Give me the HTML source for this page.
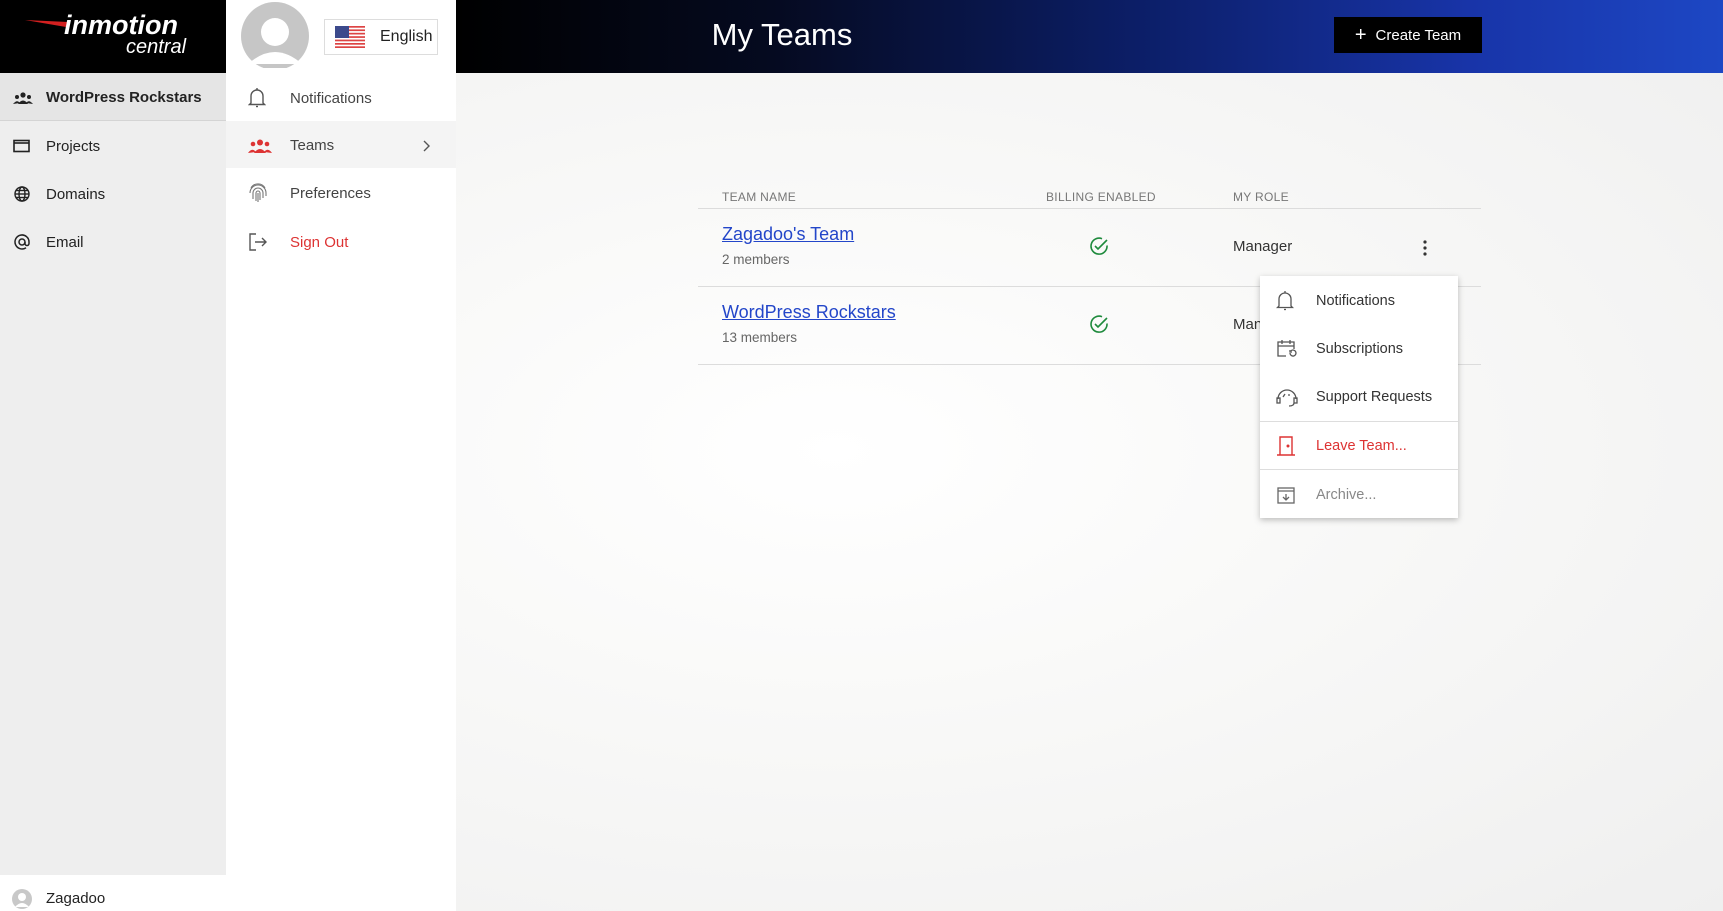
<!DOCTYPE html>
<html><head><meta charset="utf-8"><style>
*{box-sizing:border-box;margin:0;padding:0}
body{width:1723px;height:911px;overflow:hidden;font-family:"Liberation Sans",sans-serif;color:#222;position:relative;background:#f2f2f2}
.abs{position:absolute}
#logo{left:0;top:0;width:226px;height:73px;background:#000}
#side{left:0;top:73px;width:226px;height:802px;background:#eee}
.si{position:absolute;left:0;width:226px;height:48px;display:flex;align-items:center;font-size:15px;color:#222;padding-top:2px}
.si svg{position:absolute;left:13px}
.si span{position:absolute;left:46px}
#bottom{left:0;top:875px;width:226px;height:36px;background:#fff}
#panel{left:226px;top:0;width:230px;height:911px;background:#fff}
.pi{position:absolute;left:0;width:230px;height:48px;display:flex;align-items:center;font-size:15px;color:#444;padding-top:2px}
.pi svg{position:absolute;left:22px}
.pi span{position:absolute;left:64px}
#main{left:456px;top:73px;width:1267px;height:838px;background:radial-gradient(ellipse at 30% 45%,#ffffff 0%,#f8f8f7 45%,#efefef 100%)}
#hdr{left:456px;top:0;width:1267px;height:73px;background:linear-gradient(90deg,#000 0%,#050a20 25%,#0c1f6a 55%,#1834a8 80%,#1d47c4 100%)}
.th{position:absolute;top:190px;font-size:12px;color:#777;letter-spacing:.3px}
.ln{position:absolute;left:698px;width:783px;height:1px;background:#dcdcdc}
.nm{position:absolute;left:722px;font-size:18px;color:#2346c9;text-decoration:underline}
.mb{position:absolute;left:722px;font-size:13.5px;color:#666}
.rl{position:absolute;left:1233px;font-size:15px;color:#333}
#menu{left:1260px;top:276px;width:198px;height:242px;background:#fff;box-shadow:0 2px 6px rgba(0,0,0,.25)}
.mi{position:absolute;left:0;width:198px;height:44px;display:flex;align-items:center;font-size:14.5px;color:#333;padding-top:2px}
.mi svg{position:absolute;left:16px}
.mi span{position:absolute;left:56px}
</style></head><body>
<div id="logo" class="abs">
<svg width="226" height="73" viewBox="0 0 226 73"><path d="M25 20 L68 22 L66 27 Z" fill="#d32020"/>
<text x="64" y="34" font-family="Liberation Sans" font-weight="bold" font-style="italic" font-size="27" fill="#fff">inmotion</text>
<text x="126" y="53" font-family="Liberation Sans" font-style="italic" font-size="20" fill="#fff">central</text></svg>
</div>
<div id="side" class="abs">
<div class="si" style="top:0;background:#e5e5e5;border-bottom:1px solid #d4d4d4;font-weight:bold"><svg width="20" height="14" viewBox="0 0 20 14"><circle cx="10" cy="4" r="2.6" fill="#222"/><circle cx="4" cy="6" r="2" fill="#222"/><circle cx="16" cy="6" r="2" fill="#222"/><path d="M5 13 Q10 6 15 13Z M0 13 Q4 8 7 12Z M13 12 Q16 8 20 13Z" fill="#222"/></svg><span>WordPress Rockstars</span></div>
<div class="si" style="top:48px"><svg width="18" height="14"><rect x="1" y="1.5" width="15" height="11" fill="none" stroke="#222" stroke-width="1.6"/><line x1="1" y1="4" x2="16" y2="4" stroke="#222" stroke-width="1.6"/></svg><span>Projects</span></div>
<div class="si" style="top:96px"><svg width="18" height="18" viewBox="0 0 18 18" fill="none" stroke="#222" stroke-width="1.4"><circle cx="9" cy="9" r="7"/><ellipse cx="9" cy="9" rx="3" ry="7"/><line x1="2" y1="9" x2="16" y2="9"/><line x1="3" y1="5.5" x2="15" y2="5.5"/><line x1="3" y1="12.5" x2="15" y2="12.5"/></svg><span>Domains</span></div>
<div class="si" style="top:144px"><svg width="18" height="18" viewBox="0 0 18 18" fill="none" stroke="#222" stroke-width="1.5"><circle cx="9" cy="9" r="3"/><path d="M12 9v1.5a2 2 0 0 0 4 0V9a7 7 0 1 0-3 5.7"/></svg><span>Email</span></div>
</div>
<div id="bottom" class="abs"><svg style="position:absolute;left:12px;top:14px" width="20" height="20"><circle cx="10" cy="10" r="10" fill="#c8c8c8"/><circle cx="10" cy="8" r="4" fill="#fff"/><path d="M3 18 Q10 10 17 18Z" fill="#fff"/></svg><span style="position:absolute;left:46px;top:15px;font-size:15px">Zagadoo</span></div>
<div id="panel" class="abs">
<svg style="position:absolute;left:14px;top:2px" width="70" height="66" viewBox="0 0 70 66"><circle cx="35" cy="34" r="34" fill="#c6c6c6"/><circle cx="35" cy="30" r="14" fill="#fff"/><path d="M8 62 Q35 38 62 62Z" fill="#fff"/></svg>
<div style="position:absolute;left:98px;top:19px;width:114px;height:36px;border:1px solid #ddd;display:flex;align-items:center">
<svg style="margin-left:10px" width="30" height="22" viewBox="0 0 30 22"><rect width="30" height="22" fill="#fff"/><g fill="#d44"><rect y="0" width="30" height="1.7"/><rect y="3.4" width="30" height="1.7"/><rect y="6.8" width="30" height="1.7"/><rect y="10.2" width="30" height="1.7"/><rect y="13.6" width="30" height="1.7"/><rect y="17" width="30" height="1.7"/><rect y="20.3" width="30" height="1.7"/></g><rect width="14" height="12" fill="#3c4a8c"/></svg>
<span style="margin-left:15px;font-size:16px;color:#222">English</span></div>
<div class="pi" style="top:73px"><svg width="18" height="22" viewBox="0 0 18 22" fill="none" stroke="#555" stroke-width="1.4"><path d="M3 16V9a6 6 0 0 1 12 0v7l1.5 1.5h-15Z"/><path d="M8 19.5h2"/><path d="M9 1v2"/></svg><span>Notifications</span></div>
<div class="pi" style="top:121px;background:#f4f4f4;height:47px"><svg width="24" height="14" viewBox="0 0 24 14"><g fill="#d33"><circle cx="12" cy="3.5" r="3"/><circle cx="5" cy="5" r="2.3"/><circle cx="19" cy="5" r="2.3"/><path d="M6 14 Q12 6 18 14Z M0 14 Q4 8 8 13Z M16 13 Q20 8 24 14Z"/></g></svg><span>Teams</span><svg style="left:197px" width="8" height="12"><path d="M1 1l5 5-5 5" fill="none" stroke="#555" stroke-width="1.4"/></svg></div>
<div class="pi" style="top:168px"><svg width="20" height="22" viewBox="0 0 20 22" fill="none" stroke="#777" stroke-width="1.1"><path d="M3 6a8 8 0 0 1 14 0"/><path d="M2 11a8 8 0 0 1 16 0v3"/><path d="M5 17v-6a5 5 0 0 1 10 0v5"/><path d="M8 19v-8a2 2 0 0 1 4 0v7"/><path d="M10 11v9"/></svg><span>Preferences</span></div>
<div class="pi" style="top:217px"><svg width="20" height="20" viewBox="0 0 20 20" fill="none" stroke="#555" stroke-width="1.4"><path d="M8 2H2v16h6"/><path d="M7 10h11M14 6l4 4-4 4"/></svg><span style="color:#d33">Sign Out</span></div>
</div>
<div id="hdr" class="abs">
<div style="position:absolute;left:0;width:652px;top:17px;text-align:center;font-size:31px;color:#fff">My Teams</div>
<div style="position:absolute;left:878px;top:17px;width:148px;height:36px;background:#000;color:#fff;font-size:15px;display:flex;align-items:center;justify-content:center"><span style="font-size:20px;margin-right:9px;font-weight:300">+</span>Create Team</div>
</div>
<div id="main" class="abs"></div>
<div class="th" style="left:722px">TEAM NAME</div>
<div class="th" style="left:1046px">BILLING ENABLED</div>
<div class="th" style="left:1233px">MY ROLE</div>
<div class="ln" style="top:208px"></div>
<div class="nm" style="top:224px">Zagadoo's Team</div>
<div class="mb" style="top:252px">2 members</div>
<svg class="abs" style="left:1089px;top:236px" width="20" height="20" viewBox="0 0 20 20" fill="none" stroke="#1e8a3c" stroke-width="1.6"><path d="M18 9.5A8 8 0 1 1 13 2.7"/><path d="M6 10l3 3 9-9"/></svg>
<div class="rl" style="top:238px">Manager</div>
<svg class="abs" style="left:1423px;top:240px" width="4" height="16"><circle cx="2" cy="2" r="1.6" fill="#333"/><circle cx="2" cy="8" r="1.6" fill="#333"/><circle cx="2" cy="14" r="1.6" fill="#333"/></svg>
<div class="ln" style="top:286px"></div>
<div class="nm" style="top:302px">WordPress Rockstars</div>
<div class="mb" style="top:330px">13 members</div>
<svg class="abs" style="left:1089px;top:314px" width="20" height="20" viewBox="0 0 20 20" fill="none" stroke="#1e8a3c" stroke-width="1.6"><path d="M18 9.5A8 8 0 1 1 13 2.7"/><path d="M6 10l3 3 9-9"/></svg>
<div class="rl" style="top:316px">Manager</div>
<div class="ln" style="top:364px"></div>
<div id="menu" class="abs">
<div class="mi" style="top:2px"><svg width="18" height="22" viewBox="0 0 18 22" fill="none" stroke="#555" stroke-width="1.3"><path d="M3 16V9a6 6 0 0 1 12 0v7l1.5 1.5h-15Z"/><path d="M8 19.5h2"/><path d="M9 1v2"/></svg><span>Notifications</span></div>
<div class="mi" style="top:50px"><svg width="22" height="22" viewBox="0 0 22 22" fill="none" stroke="#555" stroke-width="1.3"><path d="M10 18H2V4h16v7"/><path d="M2 8h16M6 2v4M14 2v4"/><path d="M14 15a3 3 0 1 0 1-2.2M14 12v2h2"/></svg><span>Subscriptions</span></div>
<div class="mi" style="top:98px"><svg width="22" height="20" viewBox="0 0 22 20" fill="none" stroke="#555" stroke-width="1.3"><path d="M2 12a9 9 0 0 1 18 0"/><rect x="1" y="11" width="3" height="5"/><rect x="18" y="11" width="3" height="5"/><path d="M7 10l2-3M12 8h2"/><path d="M18 16q0 3-5 3"/></svg><span>Support Requests</span></div>
<div style="position:absolute;left:0;top:145px;width:198px;height:1px;background:#ddd"></div>
<div class="mi" style="top:147px"><svg width="20" height="22" viewBox="0 0 20 22" fill="none" stroke="#d33" stroke-width="1.4"><path d="M4 20V2h12v18M1 20h18"/><circle cx="12" cy="11" r=".8" fill="#d33"/></svg><span style="color:#d33">Leave Team...</span></div>
<div style="position:absolute;left:0;top:193px;width:198px;height:1px;background:#ddd"></div>
<div class="mi" style="top:196px"><svg width="20" height="20" viewBox="0 0 20 20" fill="none" stroke="#666" stroke-width="1.3"><rect x="2" y="3" width="16" height="15"/><path d="M2 6h16M10 9v6M7 12l3 3 3-3"/></svg><span style="color:#888">Archive...</span></div>
</div>
</body></html>
